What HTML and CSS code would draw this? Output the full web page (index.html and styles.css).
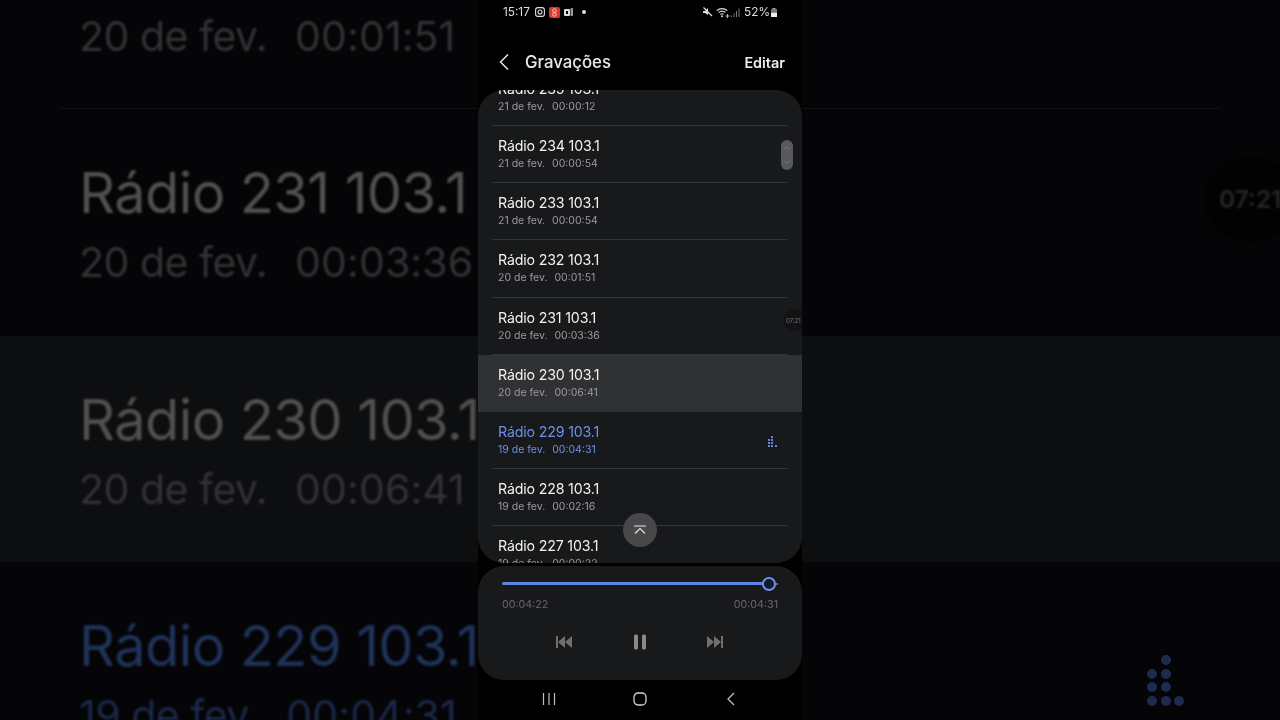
FILE: index.html
```html
<!DOCTYPE html>
<html lang="pt">
<head>
<meta charset="utf-8">
<title>Gravações</title>
<link rel="stylesheet" href="styles.css">
</head>
<body>
<div class="screen">
  <div class="side side-left">
    <div class="b-row b-first"><div class="b-sub">20 de fev.<span class="b-gap">00:01:51</span></div></div>
    <div class="b-row"><div class="b-title">Rádio 231 103.1</div><div class="b-sub">20 de fev.<span class="b-gap">00:03:36</span></div></div>
    <div class="b-row b-band"><div class="b-title">Rádio 230 103.1</div><div class="b-sub">20 de fev.<span class="b-gap">00:06:41</span></div></div>
    <div class="b-row b-blue"><div class="b-title">Rádio 229 103.1</div><div class="b-sub">19 de fev.<span class="b-gap">00:04:31</span></div></div>
  </div>

  <div class="phone">
    <div class="status">
      <span class="clock">15:17</span>
      <svg class="st-ig" width="10" height="10" viewBox="0 0 10 10"><rect x=".6" y=".6" width="8.8" height="8.8" rx="2.4" fill="none" stroke="#ddd" stroke-width="1.1"/><circle cx="5" cy="5" r="2" fill="none" stroke="#ddd" stroke-width="1.1"/></svg>
      <svg class="st-red" width="11" height="11" viewBox="0 0 11 11"><rect width="11" height="11" rx="2" fill="#d8392f"/><circle cx="5.5" cy="3.6" r="1.8" fill="none" stroke="#f4cfc9"/><circle cx="5.5" cy="7.4" r="1.8" fill="none" stroke="#f4cfc9"/></svg>
      <svg class="st-box" width="9" height="8" viewBox="0 0 9 8"><rect y="1" width="6" height="7" rx="1" fill="#ddd"/><rect x="2" y="3" width="2" height="3" fill="#000"/><rect x="6.6" y="0" width="2.4" height="8" rx=".6" fill="#999"/></svg>
      <span class="st-dot"></span>
      <span class="st-space"></span>
      <svg class="st-mute" width="11" height="10" viewBox="0 0 11 10"><path d="M1 4h2l3-3v7L3 6H1z" fill="#ddd"/><path d="M1.5 .5l8.500 8.500" stroke="#ddd" stroke-width="1.200"/></svg>
      <svg class="st-wifi" width="14" height="11" viewBox="0 0 14 11"><path d="M.8 3.500a8 8 0 0 1 10.400 0M2.600 5.500a5.400 5.400 0 0 1 6.800 0M4.300 7.400a2.800 2.800 0 0 1 3.400 0" fill="none" stroke="#ddd" stroke-width="1.100"/><circle cx="6" cy="9.300" r="1" fill="#ddd"/><path d="M9.500 9h4M11.500 7v4" stroke="#bbb"/></svg>
      <svg class="st-sig" width="9" height="9" viewBox="0 0 9 9"><path d="M.5 9V7.500M3 9V5.500M5.500 9V3M8 9V.5" stroke="#777" stroke-width="1"/></svg>
      <span class="pct">52%</span>
      <svg class="st-bat" width="6" height="9" viewBox="0 0 6 9"><rect x="1.500" width="3" height="1" fill="#aaa"/><rect y="1" width="6" height="3.500" fill="#777"/><rect y="4.500" width="6" height="4.500" fill="#eee"/></svg>
    </div>

    <header class="head">
      <svg class="back" width="12" height="18" viewBox="0 0 12 18"><path d="M10 1.500L2.500 9l7.500 7.500" fill="none" stroke="#e6e6e6" stroke-width="1.500"/></svg>
      <h1 class="title">Gravações</h1>
      <span class="edit">Editar</span>
    </header>

    <section class="card">
      <div class="list">
        <div class="row"><div class="r-title">Rádio 235 103.1</div><div class="r-sub">21 de fev.<span class="r-gap">00:00:12</span></div></div>
        <div class="row"><div class="r-title">Rádio 234 103.1</div><div class="r-sub">21 de fev.<span class="r-gap">00:00:54</span></div></div>
        <div class="row"><div class="r-title">Rádio 233 103.1</div><div class="r-sub">21 de fev.<span class="r-gap">00:00:54</span></div></div>
        <div class="row"><div class="r-title">Rádio 232 103.1</div><div class="r-sub">20 de fev.<span class="r-gap">00:01:51</span></div></div>
        <div class="row"><div class="r-title">Rádio 231 103.1</div><div class="r-sub">20 de fev.<span class="r-gap">00:03:36</span></div></div>
        <div class="row row-on"><div class="r-title">Rádio 230 103.1</div><div class="r-sub">20 de fev.<span class="r-gap">00:06:41</span></div></div>
        <div class="row row-play"><div class="r-title">Rádio 229 103.1</div><div class="r-sub">19 de fev.<span class="r-gap">00:04:31</span></div>
          <svg class="eq" width="10" height="12" viewBox="0 0 10 12"><g fill="#5f86e2"><rect x="3" y="0" width="2" height="2"/><rect y="3" width="2" height="2"/><rect x="3" y="3" width="2" height="2"/><rect y="6" width="2" height="2"/><rect x="3" y="6" width="2" height="2"/><rect y="9" width="2" height="2"/><rect x="3" y="9" width="2" height="2"/><rect x="7" y="9" width="2" height="2"/></g></svg>
        </div>
        <div class="row"><div class="r-title">Rádio 228 103.1</div><div class="r-sub">19 de fev.<span class="r-gap">00:02:16</span></div></div>
        <div class="row"><div class="r-title">Rádio 227 103.1</div><div class="r-sub">19 de fev.<span class="r-gap">00:00:22</span></div></div>
      </div>
      <div class="thumb">
        <svg width="12" height="30" viewBox="0 0 12 30"><path d="M3 9.500l3-3 3 3M3 20.500l3 3 3-3" fill="none" stroke="#777" stroke-width="1"/></svg>
      </div>
      <div class="mini-clock"><span>07:21</span></div>
      <button class="to-top" type="button" aria-label="Topo">
        <svg width="14" height="10" viewBox="0 0 14 10"><path d="M1 1h12M2 8.500l5-5 5 5" fill="none" stroke="#e4e4e4" stroke-width="1.200"/></svg>
      </button>
    </section>

    <section class="player">
      <div class="track"><div class="fill"></div><span class="knob"></span><div class="rest"></div></div>
      <div class="times"><span>00:04:22</span><span>00:04:31</span></div>
      <div class="controls">
        <svg width="18" height="14" viewBox="0 0 18 14"><g fill="#6f6f6f"><rect x="1" y="1" width="2" height="12"/><path d="M3 7l7-6v12zM10 7l7-6v12z"/></g></svg>
        <svg width="14" height="16" viewBox="0 0 14 16"><g fill="#8a8a8a"><rect x="1" y="0.500" width="4" height="15" rx="1.500"/><rect x="9" y="0.500" width="4" height="15" rx="1.500"/></g></svg>
        <svg width="18" height="14" viewBox="0 0 18 14"><g fill="#6f6f6f"><rect x="15" y="1" width="2" height="12"/><path d="M15 7L8 1v12zM8 7L1 1v12z"/></g></svg>
      </div>
    </section>

    <nav class="nav">
      <svg width="14" height="14" viewBox="0 0 14 14"><path d="M1.500 1v12M7 1v12M12.500 1v12" stroke="#bdbdbd" stroke-width="1.200"/></svg>
      <svg width="14" height="14" viewBox="0 0 14 14"><rect x="1" y="1" width="12" height="12" rx="4" fill="none" stroke="#d5d5d5" stroke-width="1.300"/></svg>
      <svg width="14" height="14" viewBox="0 0 14 14"><path d="M10 1L4 7l6 6" fill="none" stroke="#bdbdbd" stroke-width="1.300"/></svg>
    </nav>
  </div>

  <div class="side side-right">
    <div class="b-row b-first"></div>
    <div class="b-row">
      <div class="big-clock"><span>07:21</span></div>
    </div>
    <div class="b-row b-band"></div>
    <div class="b-row b-blue">
      <svg class="big-eq" width="54" height="56" viewBox="0 0 54 56"><g fill="#1c2b4e"><circle cx="19" cy="5" r="5"/><circle cx="5" cy="19" r="5"/><circle cx="19" cy="19" r="5"/><circle cx="5" cy="32" r="5"/><circle cx="19" cy="32" r="5"/><circle cx="5" cy="46" r="5"/><circle cx="19" cy="46" r="5"/><circle cx="32" cy="46" r="5"/></g></svg>
    </div>
  </div>
</div>
</body>
</html>
```

FILE: styles.css
```css
* { box-sizing: border-box; }
html, body { margin: 0; padding: 0; }
body { background: #000; font-family: Inter, "Liberation Sans", sans-serif; }

.screen { display: flex; width: 1280px; height: 720px; overflow: hidden; }

.side {
  flex: 0 0 478px;
  height: 720px;
  overflow: hidden;
  background: #050507;
  display: flex;
  flex-direction: column;
}
.b-row { position: relative; flex: 0 0 226.500px; padding: 58px 0 0 79px; white-space: nowrap; }
.b-first { flex-basis: 109px; padding: 0 0 50px 19px; display: flex; flex-direction: column; justify-content: flex-end; border-bottom: 1px solid #0f1012; margin-left: 60px; }
.side-right .b-first { margin-left: 0; margin-right: 60px; }
.b-band { background: #0d0e10; }
.b-title { font-size: 56px; line-height: 52px; letter-spacing: -.6px; color: #505050; filter: blur(1px); }
.b-sub { font-size: 41px; line-height: 44px; letter-spacing: -.5px; margin-top: 21px; color: #333336; filter: blur(1px); }
.b-first .b-sub { margin-top: 0; }
.b-gap { margin-left: 28px; letter-spacing: .1px; }
.b-blue .b-title { color: #1f3258; }
.b-blue .b-sub { color: #1a2a4a; }

.big-clock { position: absolute; left: 403px; top: 48px; width: 92px; height: 84px; border-radius: 50%; background: #020203; display: flex; align-items: center; padding-left: 14px; font-size: 24px; font-weight: 700; color: #232323; filter: blur(1px); }
.big-eq { position: absolute; left: 345px; top: 93px; filter: blur(.6px); }

.phone { flex: 0 0 324px; height: 720px; background: #000; display: flex; flex-direction: column; color: #fff; filter: blur(.3px); }

.status { height: 24px; display: flex; align-items: center; padding: 0 25px; font-size: 11.800px; color: #ddd; }
.clock { margin-right: 5px; }
.st-red { margin-left: 4px; }
.st-box { margin-left: 4px; }
.st-dot { width: 4px; height: 4px; border-radius: 50%; background: #ddd; margin-left: 9px; }
.st-space { flex: 1; }
.st-mute { margin-right: 3px; }
.st-wifi { margin-right: 1px; }
.st-sig { margin-right: 4px; }
.st-bat { margin-left: 1px; }

.head { height: 66px; padding: 14px 17px 4px 20px; display: flex; align-items: center; }
.back { margin-right: 15px; }
.title { flex: 1; margin: 0; font-size: 16.800px; font-weight: 500; color: #e8e8e8; }
.edit { font-size: 14.400px; font-weight: 600; color: #eee; }

.card { position: relative; flex: 0 0 473px; background: #18191b; border-radius: 26px; overflow: hidden; }
.list { margin-top: -21px; display: flex; flex-direction: column; }
.row { position: relative; flex: 0 0 57.150px; height: 57.150px; padding: 11px 14px 0 20px; }
.row::after { content: ""; position: absolute; left: 14px; right: 15px; bottom: 0; height: 1px; background: #333437; }
.r-title { font-size: 14.200px; line-height: 18px; color: #f2f2f2; letter-spacing: -.16px; }
.r-sub { font-size: 10.500px; line-height: 15px; margin-top: 1px; color: #9b9b9e; }
.r-gap { margin-left: 7px; }
.row-on { background: #303133; }
.row-on::after { display: none; }
.row-play .r-title { color: #6c90ea; }
.row-play .r-sub { color: #6c90ea; }
.eq { position: absolute; right: 24px; top: 24px; }

.thumb { position: absolute; left: 303px; top: 50px; width: 12px; height: 30px; border-radius: 6px; background: #58595c; }
.thumb svg { display: block; }
.mini-clock { position: absolute; left: 305px; top: 219px; width: 24px; height: 22px; border-radius: 50%; background: #121315; display: flex; align-items: center; padding-left: 3px; font-size: 6px; color: #777; white-space: nowrap; }
.to-top { position: absolute; left: 145px; top: 423px; width: 34px; height: 34px; border: 0; padding: 0; border-radius: 50%; background: #47484a; display: flex; align-items: center; justify-content: center; }

.player { margin-top: 3px; flex: 0 0 114px; background: #18191b; border-radius: 26px; padding: 16px 24px 0; }
.track { position: relative; height: 3px; border-radius: 2px; }
.fill { height: 3px; width: 267px; background: #5f86e2; border-radius: 2px; }
.rest { position: absolute; left: 267px; top: 1px; width: 9px; height: 2px; background: #666; }
.knob { position: absolute; z-index: 1; left: 260px; top: -5px; width: 14px; height: 14px; border-radius: 50%; background: #0f1a2c; border: 2px solid #6a90ea; }
.times { display: flex; justify-content: space-between; margin-top: 12px; font-size: 10.700px; line-height: 16px; color: #68686a; }
.controls { display: flex; justify-content: space-between; align-items: center; padding: 0 54px 0 53px; margin-top: 21px; }
.controls svg { display: block; }

.nav { flex: 1; display: flex; align-items: center; justify-content: space-between; padding: 0 64px 2px 64px; }
```
